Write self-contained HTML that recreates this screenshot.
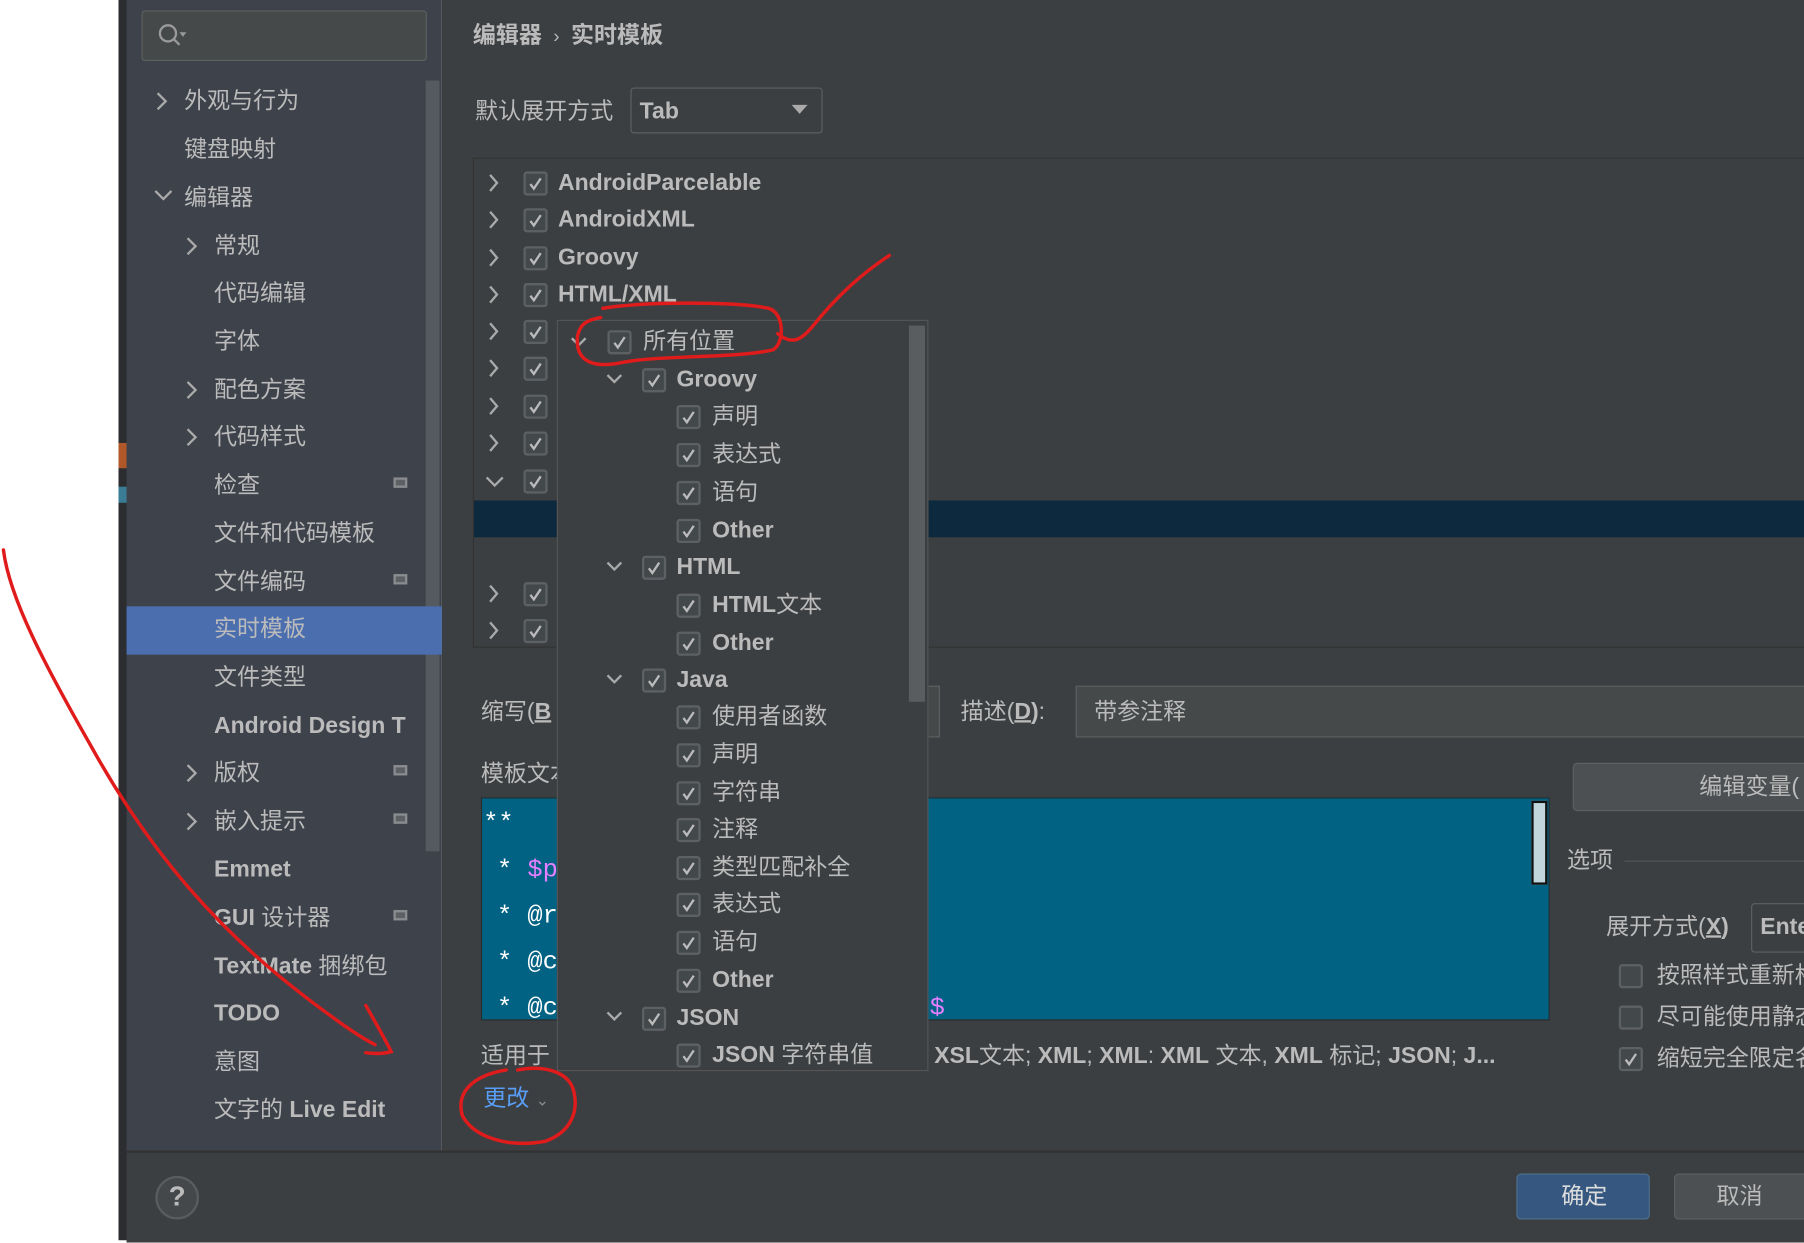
<!DOCTYPE html>
<html><head><meta charset="utf-8"><style>
html,body{margin:0;padding:0;width:1804px;height:1240px;overflow:hidden;background:#fff}
#s{position:absolute;left:0;top:0;width:1568px;height:1078px;transform:scale(1.15051);transform-origin:0 0;font-family:"Liberation Sans","Noto Sans CJK SC",sans-serif;color:#bbb;font-size:20px}
.a{position:absolute}
.t{position:absolute;white-space:nowrap;line-height:24px;margin-top:-12px}
b{font-weight:bold}
.cb{position:absolute;width:17px;height:17px;border:2px solid #5d6164;border-radius:3px;background:#43484b;margin-top:-10px}
.cb svg{position:absolute;left:1px;top:1px}
.ch{position:absolute;margin-top:-7px}
.ic{position:absolute;width:12px;height:9px;border:2px solid #8a8d90;margin-top:-7px;box-sizing:border-box;background:#5d6064}
</style></head><body><div id="s">
<!-- background areas -->
<div class="a" style="left:103px;top:0;width:8px;height:1078px;background:#2b2d30"></div>
<div class="a" style="left:103px;top:385px;width:8px;height:22px;background:#b0582a"></div>
<div class="a" style="left:103px;top:423px;width:8px;height:14px;background:#3a7c95"></div>
<div class="a" style="left:110px;top:0;width:274px;height:1000px;background:#3e424b"></div>
<div class="a" style="left:384px;top:0;width:1184px;height:1000px;background:#3c3f41"></div>
<div class="a" style="left:110px;top:1000px;width:1458px;height:78px;background:#3c3f41;border-top:2px solid #323232"></div>
<!-- sidebar -->
<div class="a" style="left:123px;top:9px;width:246px;height:42px;background:#45494a;border:1px solid #5e6060;border-radius:3px"></div>
<svg class="a" style="left:137px;top:20px" width="30" height="22"><circle cx="9" cy="9" r="7" fill="none" stroke="#9a9a9a" stroke-width="2"/><line x1="14" y1="14" x2="19" y2="19" stroke="#9a9a9a" stroke-width="2"/><path d="M19 8h6l-3 4z" fill="#9a9a9a"/></svg>
<div class="a" style="left:370px;top:70px;width:12px;height:670px;background:#555960"></div>
<div class="a" style="left:110px;top:527px;width:274px;height:42px;background:#4b6eaf"></div>
<svg class="a" style="left:0;top:0" width="400" height="1000">
<g fill="none" stroke="#aaa" stroke-width="2">
<path d="M137 81l7 7-7 7"/><path d="M135 166l7 7 7-7"/><path d="M163 207l7 7-7 7"/><path d="M163 332l7 7-7 7"/><path d="M163 373l7 7-7 7"/><path d="M163 665l7 7-7 7"/><path d="M163 707l7 7-7 7"/>
</g></svg>
<div class="t" style="left:160px;top:88px">外观与行为</div>
<div class="t" style="left:160px;top:130px">键盘映射</div>
<div class="t" style="left:160px;top:172px">编辑器</div>
<div class="t" style="left:186px;top:214px">常规</div>
<div class="t" style="left:186px;top:255px">代码编辑</div>
<div class="t" style="left:186px;top:297px">字体</div>
<div class="t" style="left:186px;top:339px">配色方案</div>
<div class="t" style="left:186px;top:380px">代码样式</div>
<div class="t" style="left:186px;top:422px">检查</div>
<div class="t" style="left:186px;top:464px">文件和代码模板</div>
<div class="t" style="left:186px;top:506px">文件编码</div>
<div class="t" style="left:186px;top:547px">实时模板</div>
<div class="t" style="left:186px;top:589px">文件类型</div>
<div class="t" style="left:186px;top:631px"><b>Android Design T</b></div>
<div class="t" style="left:186px;top:672px">版权</div>
<div class="t" style="left:186px;top:714px">嵌入提示</div>
<div class="t" style="left:186px;top:756px"><b>Emmet</b></div>
<div class="t" style="left:186px;top:798px"><b>GUI</b> 设计器</div>
<div class="t" style="left:186px;top:840px"><b>TextMate</b> 捆绑包</div>
<div class="t" style="left:186px;top:881px"><b>TODO</b></div>
<div class="t" style="left:186px;top:923px">意图</div>
<div class="t" style="left:186px;top:965px">文字的 <b>Live Edit</b></div>
<div class="ic" style="left:342px;top:422px"></div><div class="ic" style="left:342px;top:506px"></div><div class="ic" style="left:342px;top:672px"></div><div class="ic" style="left:342px;top:714px"></div><div class="ic" style="left:342px;top:798px"></div>
<div class="a" style="left:135px;top:1022px;width:34px;height:34px;border:2px solid #5a5d60;border-radius:50%;background:#45484b;color:#bbb;font-size:24px;font-weight:bold;text-align:center;line-height:34px">?</div>
<!-- main -->
<div class="t" style="left:411px;top:31px;font-weight:bold;font-size:20px">编辑器 <span style="font-weight:normal;font-size:16px">&nbsp;›&nbsp;</span> 实时模板</div>
<div class="t" style="left:413px;top:97px">默认展开方式</div>
<div class="a" style="left:548px;top:76px;width:165px;height:38px;border:1px solid #5e6060;border-radius:3px;background:#3c3f41"></div>
<div class="t" style="left:556px;top:97px"><b>Tab</b></div>
<svg class="a" style="left:688px;top:91px" width="16" height="10"><path d="M0 0h14l-7 8z" fill="#aaa"/></svg>
<div class="a" style="left:411px;top:137px;width:1157px;height:424px;border:1px solid #323232;border-right:none;background:#3c3f41"></div>
<div class="a" style="left:412px;top:435px;width:1156px;height:32px;background:#0d293e"></div>
<svg class="a" style="left:0;top:0" width="500" height="600"><g fill="none" stroke="#aaa" stroke-width="2">
<path d="M426 152l6 7-6 7"/><path d="M426 184l6 7-6 7"/><path d="M426 217l6 7-6 7"/><path d="M426 249l6 7-6 7"/><path d="M426 281l6 7-6 7"/><path d="M426 313l6 7-6 7"/><path d="M426 346l6 7-6 7"/><path d="M426 378l6 7-6 7"/><path d="M423 415l7 7 7-7"/><path d="M426 509l6 7-6 7"/><path d="M426 541l6 7-6 7"/></g></svg>
<div class="t" style="left:485px;top:159px"><b>AndroidParcelable</b></div>
<div class="t" style="left:485px;top:191px"><b>AndroidXML</b></div>
<div class="t" style="left:485px;top:224px"><b>Groovy</b></div>
<div class="t" style="left:485px;top:256px"><b>HTML/XML</b></div>
<!-- checkboxes main tree -->
<div class="cb" style="left:455px;top:159px"><svg width="15" height="15"><path d="M3 8l3 4 6-9" fill="none" stroke="#bbb" stroke-width="2"/></svg></div>
<div class="cb" style="left:455px;top:191px"><svg width="15" height="15"><path d="M3 8l3 4 6-9" fill="none" stroke="#bbb" stroke-width="2"/></svg></div>
<div class="cb" style="left:455px;top:224px"><svg width="15" height="15"><path d="M3 8l3 4 6-9" fill="none" stroke="#bbb" stroke-width="2"/></svg></div>
<div class="cb" style="left:455px;top:256px"><svg width="15" height="15"><path d="M3 8l3 4 6-9" fill="none" stroke="#bbb" stroke-width="2"/></svg></div>
<div class="cb" style="left:455px;top:288px"><svg width="15" height="15"><path d="M3 8l3 4 6-9" fill="none" stroke="#bbb" stroke-width="2"/></svg></div>
<div class="cb" style="left:455px;top:320px"><svg width="15" height="15"><path d="M3 8l3 4 6-9" fill="none" stroke="#bbb" stroke-width="2"/></svg></div>
<div class="cb" style="left:455px;top:353px"><svg width="15" height="15"><path d="M3 8l3 4 6-9" fill="none" stroke="#bbb" stroke-width="2"/></svg></div>
<div class="cb" style="left:455px;top:385px"><svg width="15" height="15"><path d="M3 8l3 4 6-9" fill="none" stroke="#bbb" stroke-width="2"/></svg></div>
<div class="cb" style="left:455px;top:418px"><svg width="15" height="15"><path d="M3 8l3 4 6-9" fill="none" stroke="#bbb" stroke-width="2"/></svg></div>
<div class="cb" style="left:455px;top:516px"><svg width="15" height="15"><path d="M3 8l3 4 6-9" fill="none" stroke="#bbb" stroke-width="2"/></svg></div>
<div class="cb" style="left:455px;top:548px"><svg width="15" height="15"><path d="M3 8l3 4 6-9" fill="none" stroke="#bbb" stroke-width="2"/></svg></div>
<!-- lower form -->
<div class="t" style="left:418px;top:619px">缩写(<b><u>B</u></b></div>
<div class="a" style="left:780px;top:596px;width:36px;height:43px;border:1px solid #5e6060;border-left:none;background:#45494a"></div>
<div class="t" style="left:835px;top:619px">描述(<b><u>D</u>)</b>:</div>
<div class="a" style="left:935px;top:596px;width:640px;height:43px;border:1px solid #5e6060;background:#45494a"></div>
<div class="t" style="left:951px;top:619px">带参注释</div>
<div class="t" style="left:418px;top:673px">模板文本</div>
<div class="a" style="left:418px;top:693px;width:929px;height:194px;background:#016283;border:1px solid #2b2b2b;box-sizing:border-box"></div>
<div class="a" style="left:1331px;top:696px;width:14px;height:73px;background:#c0d6dc;border:2px solid #111;box-sizing:border-box"></div>
<div class="t" style="left:420px;top:716px;font-family:'Liberation Mono',monospace;color:#fff;font-size:22px">**</div>
<div class="t" style="left:432px;top:757px;font-family:'Liberation Mono',monospace;color:#fff;font-size:22px">* <span style="color:#e57fff">$p</span></div>
<div class="t" style="left:432px;top:797px;font-family:'Liberation Mono',monospace;color:#fff;font-size:22px">* @r</div>
<div class="t" style="left:432px;top:837px;font-family:'Liberation Mono',monospace;color:#fff;font-size:22px">* @c</div>
<div class="t" style="left:432px;top:877px;font-family:'Liberation Mono',monospace;color:#fff;font-size:22px">* @c</div>
<div class="t" style="left:808px;top:877px;font-family:'Liberation Mono',monospace;color:#e57fff;font-size:22px">$</div>
<div class="t" style="left:418px;top:918px">适用于</div>
<div class="t" style="left:812px;top:918px"><b>XSL</b>文本; <b>XML</b>; <b>XML</b>: <b>XML</b> 文本, <b>XML</b> 标记; <b>JSON</b>; <b>J...</b></div>
<div class="t" style="left:420px;top:955px;color:#589df6">更改 <span style="font-size:14px;color:#8a8d90">⌄</span></div>
<!-- right column -->
<div class="a" style="left:1367px;top:663px;width:210px;height:40px;border:1px solid #5e6060;border-radius:4px;background:#4c5052"></div>
<div class="t" style="left:1477px;top:684px">编辑变量(</div>
<div class="t" style="left:1362px;top:748px">选项</div>
<div class="a" style="left:1412px;top:748px;width:160px;height:1px;background:#555"></div>
<div class="t" style="left:1396px;top:806px">展开方式(<b><u>X</u>)</b></div>
<div class="a" style="left:1522px;top:785px;width:60px;height:41px;border:1px solid #5e6060;border-radius:3px"></div>
<div class="t" style="left:1530px;top:806px"><b>Ente</b></div>
<div class="cb" style="left:1407px;top:848px"></div>
<div class="cb" style="left:1407px;top:884px"></div>
<div class="cb" style="left:1407px;top:920px"><svg width="15" height="15"><path d="M3 8l3 4 6-9" fill="none" stroke="#bbb" stroke-width="2"/></svg></div>
<div class="t" style="left:1440px;top:848px">按照样式重新格</div>
<div class="t" style="left:1440px;top:884px">尽可能使用静态</div>
<div class="t" style="left:1440px;top:920px">缩短完全限定名</div>
<div class="a" style="left:1318px;top:1020px;width:116px;height:40px;border:1px solid #4c708c;border-radius:4px;background:#365880;box-sizing:border-box"></div>
<div class="t" style="left:1357px;top:1040px;color:#ddd">确定</div>
<div class="a" style="left:1455px;top:1020px;width:120px;height:40px;border:1px solid #5e6060;border-radius:4px;background:#4c5052;box-sizing:border-box"></div>
<div class="t" style="left:1492px;top:1040px">取消</div>
<!-- popup -->
<div class="a" style="left:484px;top:278px;width:323px;height:653px;background:#3c3f41;border:1px solid #555;box-sizing:border-box"></div>
<div class="a" style="left:790px;top:283px;width:14px;height:327px;background:#5a5d60"></div>
<svg class="a" style="left:0;top:0" width="800" height="940"><g fill="none" stroke="#aaa" stroke-width="2">
<path d="M497 294l6 6 6-6"/><path d="M528 326l6 6 6-6"/><path d="M528 489l6 6 6-6"/><path d="M528 587l6 6 6-6"/><path d="M528 880l6 6 6-6"/></g></svg>
<div class="t" style="left:559px;top:297px">所有位置</div>
<div class="t" style="left:588px;top:330px"><b>Groovy</b></div>
<div class="t" style="left:619px;top:362px">声明</div>
<div class="t" style="left:619px;top:395px">表达式</div>
<div class="t" style="left:619px;top:428px">语句</div>
<div class="t" style="left:619px;top:461px"><b>Other</b></div>
<div class="t" style="left:588px;top:493px"><b>HTML</b></div>
<div class="t" style="left:619px;top:526px"><b>HTML</b>文本</div>
<div class="t" style="left:619px;top:559px"><b>Other</b></div>
<div class="t" style="left:588px;top:591px"><b>Java</b></div>
<div class="t" style="left:619px;top:623px">使用者函数</div>
<div class="t" style="left:619px;top:656px">声明</div>
<div class="t" style="left:619px;top:689px">字符串</div>
<div class="t" style="left:619px;top:721px">注释</div>
<div class="t" style="left:619px;top:754px">类型匹配补全</div>
<div class="t" style="left:619px;top:786px">表达式</div>
<div class="t" style="left:619px;top:819px">语句</div>
<div class="t" style="left:619px;top:852px"><b>Other</b></div>
<div class="t" style="left:588px;top:885px"><b>JSON</b></div>
<div class="t" style="left:619px;top:917px"><b>JSON</b> 字符串值</div>
<div class="cb" style="left:528px;top:297px"><svg width="15" height="15"><path d="M3 8l3 4 6-9" fill="none" stroke="#bbb" stroke-width="2"/></svg></div>
<div class="cb" style="left:558px;top:330px"><svg width="15" height="15"><path d="M3 8l3 4 6-9" fill="none" stroke="#bbb" stroke-width="2"/></svg></div>
<div class="cb" style="left:588px;top:362px"><svg width="15" height="15"><path d="M3 8l3 4 6-9" fill="none" stroke="#bbb" stroke-width="2"/></svg></div>
<div class="cb" style="left:588px;top:395px"><svg width="15" height="15"><path d="M3 8l3 4 6-9" fill="none" stroke="#bbb" stroke-width="2"/></svg></div>
<div class="cb" style="left:588px;top:428px"><svg width="15" height="15"><path d="M3 8l3 4 6-9" fill="none" stroke="#bbb" stroke-width="2"/></svg></div>
<div class="cb" style="left:588px;top:461px"><svg width="15" height="15"><path d="M3 8l3 4 6-9" fill="none" stroke="#bbb" stroke-width="2"/></svg></div>
<div class="cb" style="left:558px;top:493px"><svg width="15" height="15"><path d="M3 8l3 4 6-9" fill="none" stroke="#bbb" stroke-width="2"/></svg></div>
<div class="cb" style="left:588px;top:526px"><svg width="15" height="15"><path d="M3 8l3 4 6-9" fill="none" stroke="#bbb" stroke-width="2"/></svg></div>
<div class="cb" style="left:588px;top:559px"><svg width="15" height="15"><path d="M3 8l3 4 6-9" fill="none" stroke="#bbb" stroke-width="2"/></svg></div>
<div class="cb" style="left:558px;top:591px"><svg width="15" height="15"><path d="M3 8l3 4 6-9" fill="none" stroke="#bbb" stroke-width="2"/></svg></div>
<div class="cb" style="left:588px;top:623px"><svg width="15" height="15"><path d="M3 8l3 4 6-9" fill="none" stroke="#bbb" stroke-width="2"/></svg></div>
<div class="cb" style="left:588px;top:656px"><svg width="15" height="15"><path d="M3 8l3 4 6-9" fill="none" stroke="#bbb" stroke-width="2"/></svg></div>
<div class="cb" style="left:588px;top:689px"><svg width="15" height="15"><path d="M3 8l3 4 6-9" fill="none" stroke="#bbb" stroke-width="2"/></svg></div>
<div class="cb" style="left:588px;top:721px"><svg width="15" height="15"><path d="M3 8l3 4 6-9" fill="none" stroke="#bbb" stroke-width="2"/></svg></div>
<div class="cb" style="left:588px;top:754px"><svg width="15" height="15"><path d="M3 8l3 4 6-9" fill="none" stroke="#bbb" stroke-width="2"/></svg></div>
<div class="cb" style="left:588px;top:786px"><svg width="15" height="15"><path d="M3 8l3 4 6-9" fill="none" stroke="#bbb" stroke-width="2"/></svg></div>
<div class="cb" style="left:588px;top:819px"><svg width="15" height="15"><path d="M3 8l3 4 6-9" fill="none" stroke="#bbb" stroke-width="2"/></svg></div>
<div class="cb" style="left:588px;top:852px"><svg width="15" height="15"><path d="M3 8l3 4 6-9" fill="none" stroke="#bbb" stroke-width="2"/></svg></div>
<div class="cb" style="left:558px;top:885px"><svg width="15" height="15"><path d="M3 8l3 4 6-9" fill="none" stroke="#bbb" stroke-width="2"/></svg></div>
<div class="cb" style="left:588px;top:917px"><svg width="15" height="15"><path d="M3 8l3 4 6-9" fill="none" stroke="#bbb" stroke-width="2"/></svg></div>
<!-- red annotations -->
<svg class="a" style="left:0;top:0" width="1568" height="1078"><g fill="none" stroke="#e01b1b" stroke-width="3" stroke-linecap="round">
<path d="M524 268C560 262 640 262 668 268C682 272 682 298 672 304C640 312 570 308 536 316C510 320 500 310 502 292C504 282 510 278 522 276"/>
<path d="M676 290C688 300 696 296 706 284C730 254 752 236 773 222"/>
<path d="M3 478C8 520 40 580 80 650C130 740 190 810 270 870C290 885 310 900 326 908"/>
<path d="M318 874C326 888 334 902 340 914C334 916 326 916 318 915"/>
<path d="M450 930C470 926 492 930 498 946C504 966 496 984 474 992C440 998 412 988 402 970C396 950 410 935 440 930"/>
</g></svg>
</div></body></html>
